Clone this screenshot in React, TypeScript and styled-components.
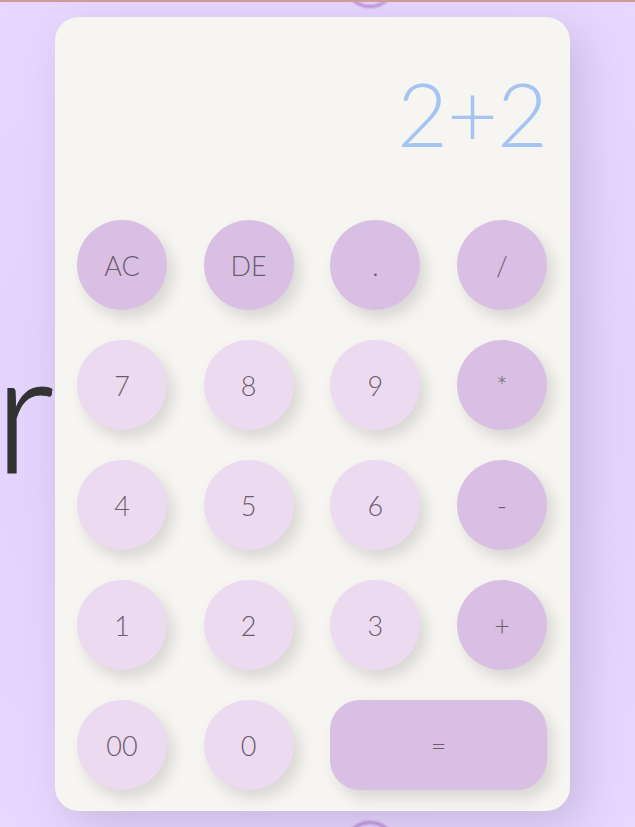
import React from "react";
import styled, { createGlobalStyle } from "styled-components";

const Global = createGlobalStyle`
  html { margin: 0; padding: 0; height: 827px; overflow: hidden; }
  body {
    margin: 0;
    padding: 0;
    background: radial-gradient(circle at 50% 50%, #dccbf6 0%, #e4d4fd 60%, #e8d8ff 100%);
    border-top: 2px solid #cf9b98;
    height: 825px;
    overflow: hidden;
    font-family: Lato, "Open Sans", sans-serif;
  }
`;

const Page = styled.div`
  position: relative;
  height: 825px;
  overflow: hidden;
  padding: 15px 0 0 55px;
  box-sizing: border-box;
`;

const BackWord = styled.div`
  position: absolute;
  left: -6px;
  top: 320px;
  font-family: Lato, sans-serif;
  font-weight: 300;
  font-size: 170px;
  line-height: 1;
  color: #323232;
  -webkit-text-stroke: 1px #323232;
`;

const Ring = styled.div<{ $top: number }>`
  position: absolute;
  left: 343px;
  top: ${(p) => p.$top}px;
  width: 54px;
  height: 54px;
  border-radius: 50%;
  border: 3px solid #b88ad6;
  filter: blur(0.8px);
  box-sizing: border-box;
`;

const Card = styled.div`
  position: relative;
  width: 515px;
  height: 794px;
  box-sizing: border-box;
  padding: 0 23px 21px 22px;
  background: #f6f5f1;
  border-radius: 24px;
  box-shadow: 12px 14px 40px rgba(120, 100, 130, 0.25);
  display: flex;
  flex-direction: column;
`;

const Display = styled.div`
  height: 203px;
  display: flex;
  justify-content: flex-end;
  align-items: flex-start;
  padding-top: 52px;
  box-sizing: border-box;
  font-family: Lato, sans-serif;
  font-weight: 300;
  font-size: 88px;
  line-height: 1;
  color: #a6c4f2;
  letter-spacing: -1px;
`;

const Keys = styled.div`
  display: grid;
  grid-template-columns: repeat(4, 90px);
  grid-auto-rows: 90px;
  justify-content: space-between;
  row-gap: 30px;
`;

const Key = styled.button<{ $op?: boolean; $wide?: boolean }>`
  border: none;
  margin: 0;
  padding: 0;
  grid-column: ${(p) => (p.$wide ? "span 2" : "auto")};
  border-radius: ${(p) => (p.$wide ? "30px" : "50%")};
  background: ${(p) => (p.$op ? "#dabfe4" : "#ecdaf1")};
  color: #6a5c6e;
  font-family: Lato, sans-serif;
  font-weight: 300;
  font-size: 27px;
  box-shadow: 6px 8px 14px rgba(120, 110, 110, 0.22);
  display: flex;
  align-items: center;
  justify-content: center;
  cursor: pointer;
`;

const keys: { label: string; op?: boolean; wide?: boolean }[] = [
  { label: "AC", op: true },
  { label: "DE", op: true },
  { label: ".", op: true },
  { label: "/", op: true },
  { label: "7" },
  { label: "8" },
  { label: "9" },
  { label: "*", op: true },
  { label: "4" },
  { label: "5" },
  { label: "6" },
  { label: "-", op: true },
  { label: "1" },
  { label: "2" },
  { label: "3" },
  { label: "+", op: true },
  { label: "00" },
  { label: "0" },
  { label: "=", op: true, wide: true },
];

export default function App() {
  return (
    <>
      <Global />
      <Page>
        <Ring $top={-48} />
        <Ring $top={819} />
        <BackWord>r</BackWord>
        <Card>
          <Display>2+2</Display>
          <Keys>
            {keys.map((k) => (
              <Key key={k.label} $op={k.op} $wide={k.wide}>
                {k.label}
              </Key>
            ))}
          </Keys>
        </Card>
      </Page>
    </>
  );
}
